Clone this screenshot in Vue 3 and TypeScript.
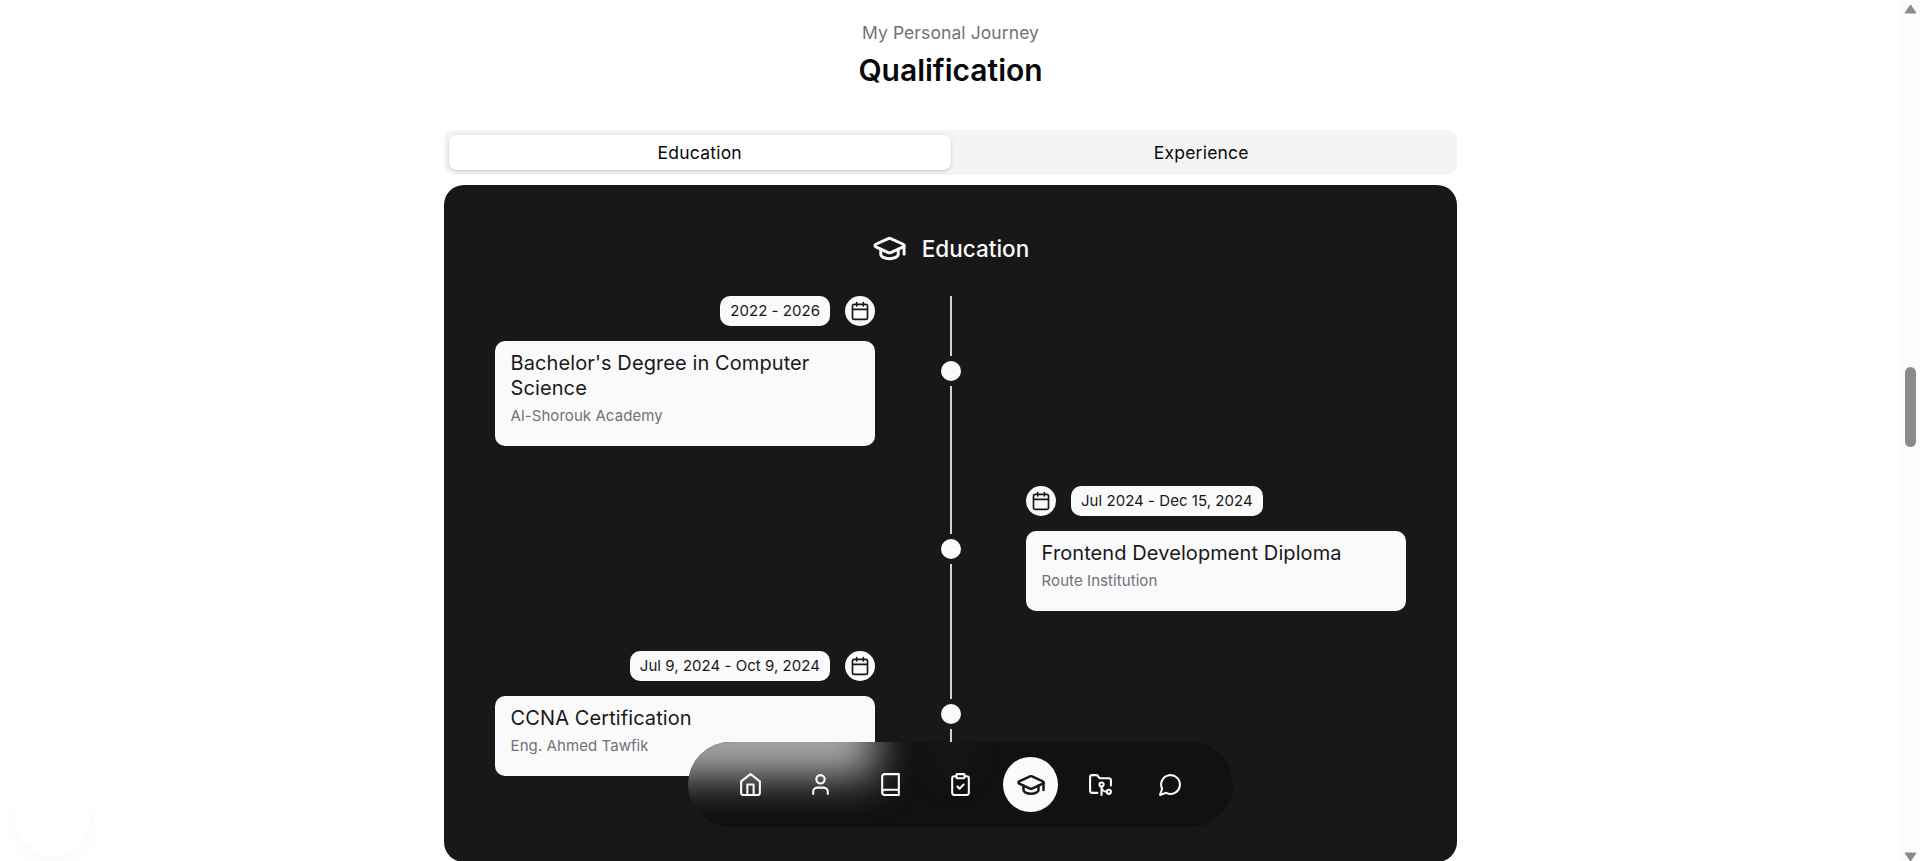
<template>
  <div class="page">
    <main class="content">
      <section class="qualification">
        <p class="section-subtitle">My Personal Journey</p>
        <h2 class="section-title">Qualification</h2>

        <div class="tabs">
          <button
            v-for="tab in tabs"
            :key="tab"
            class="tab"
            :class="{ selected: tab === activeTab }"
            @click="activeTab = tab"
          >
            {{ tab }}
          </button>
        </div>

        <div class="panel">
          <div class="panel-header">
            <svg class="icon header-icon" viewBox="0 0 24 24">
              <path v-for="d in icons.cap" :key="d" :d="d" />
            </svg>
            <h3>{{ activeTab }}</h3>
          </div>

          <!-- Timeline -->
          <div class="timeline">
            <div
              v-for="(item, index) in items"
              :key="item.title"
              class="row"
              :class="{ reverse: index % 2 === 1 }"
            >
              <div class="entry">
                <div class="date-row">
                  <span class="date">{{ item.date }}</span>
                  <span class="date-icon">
                    <svg class="icon calendar-icon" viewBox="0 0 24 24">
                      <path v-for="d in icons.calendar" :key="d" :d="d" />
                    </svg>
                  </span>
                </div>
                <div class="card">
                  <h4>{{ item.title }}</h4>
                  <p>{{ item.place }}</p>
                </div>
              </div>
              <div class="axis">
                <span class="line"></span>
                <span class="dot"></span>
                <span class="line"></span>
              </div>
              <div class="spacer"></div>
            </div>
          </div>
        </div>
      </section>
    </main>

    <!-- Scrollbar -->
    <div class="scrollbar">
      <svg class="arrow" viewBox="0 0 13 10"><path d="M6.5 1 L12 9 H1 Z" /></svg>
      <div class="thumb"></div>
      <svg class="arrow" viewBox="0 0 13 10"><path d="M6.5 9 L12 1 H1 Z" /></svg>
    </div>

    <div class="floating-circle"></div>

    <!-- Bottom navigation -->
    <nav class="navbar">
      <button
        v-for="link in links"
        :key="link"
        class="nav-item"
        :class="{ current: link === activeLink }"
        @click="activeLink = link"
      >
        <svg class="icon nav-icon" viewBox="0 0 24 24">
          <path v-for="d in icons[link]" :key="d" :d="d" />
        </svg>
      </button>
    </nav>
  </div>
</template>

<script setup lang="ts">
import { computed, ref } from 'vue'

interface TimelineItem {
  date: string
  title: string
  place: string
}

const tabs = ['Education', 'Experience']
const activeTab = ref('Education')

const links = ['home', 'user', 'book', 'clipboard', 'cap', 'folder', 'message']
const activeLink = ref('cap')

const timeline: Record<string, TimelineItem[]> = {
  Education: [
    { date: '2022 - 2026', title: "Bachelor's Degree in Computer Science", place: 'Al-Shorouk Academy' },
    { date: 'Jul 2024 - Dec 15, 2024', title: 'Frontend Development Diploma', place: 'Route Institution' },
    { date: 'Jul 9, 2024 - Oct 9, 2024', title: 'CCNA Certification', place: 'Eng. Ahmed Tawfik' }
  ],
  Experience: []
}

const items = computed(() => timeline[activeTab.value])

const icons: Record<string, string[]> = {
  home: [
    'm3 9 9-7 9 7v11a2 2 0 0 1-2 2H5a2 2 0 0 1-2-2z',
    'M9 22V12h6v10'
  ],
  user: [
    'M19 21v-2a4 4 0 0 0-4-4H9a4 4 0 0 0-4 4v2',
    'M8 7a4 4 0 1 0 8 0a4 4 0 1 0-8 0'
  ],
  book: ['M4 19.5v-15A2.5 2.5 0 0 1 6.5 2H20v20H6.5a2.5 2.5 0 0 1 0-5H20'],
  clipboard: [
    'M9 2h6a1 1 0 0 1 1 1v2a1 1 0 0 1-1 1H9a1 1 0 0 1-1-1V3a1 1 0 0 1 1-1z',
    'M16 4h2a2 2 0 0 1 2 2v14a2 2 0 0 1-2 2H6a2 2 0 0 1-2-2V6a2 2 0 0 1 2-2h2',
    'm9 14 2 2 4-4'
  ],
  cap: [
    'M21.42 10.922a1 1 0 0 0-.019-1.838L12.83 5.18a2 2 0 0 0-1.66 0L2.6 9.08a1 1 0 0 0 0 1.832l8.57 3.908a2 2 0 0 0 1.66 0z',
    'M22 10v6',
    'M6 12.5V16a6 3 0 0 0 12 0v-3.5'
  ],
  folder: [
    'M9 20H4a2 2 0 0 1-2-2V5a2 2 0 0 1 2-2h3.9a2 2 0 0 1 1.69.9l.81 1.2a2 2 0 0 0 1.67.9H20a2 2 0 0 1 2 2v5',
    'M11 12a2 2 0 1 0 4 0a2 2 0 1 0-4 0',
    'M18 19c-2.8 0-5-2.2-5-5v8',
    'M18 19a2 2 0 1 0 4 0a2 2 0 1 0-4 0'
  ],
  message: ['M7.9 20A9 9 0 1 0 4 16.1L2 22Z'],
  calendar: [
    'M8 2v4',
    'M16 2v4',
    'M5 4h14a2 2 0 0 1 2 2v14a2 2 0 0 1-2 2H5a2 2 0 0 1-2-2V6a2 2 0 0 1 2-2z',
    'M3 10h18'
  ]
}
</script>

<style>
body {
  margin: 0;
  overflow: hidden;
}
</style>

<style scoped>
.page {
  display: flex;
  height: 100vh;
  overflow: hidden;
  background: #fff;
  color: #09090b;
  font-family: Inter, "Liberation Sans", sans-serif;
}

h2,
h3,
h4,
p {
  margin: 0;
}

button {
  padding: 0;
  border: none;
  background: none;
  color: inherit;
  font-family: inherit;
  cursor: pointer;
}

.icon {
  display: block;
  flex: none;
  fill: none;
  stroke: currentColor;
  stroke-width: 2;
  stroke-linecap: round;
  stroke-linejoin: round;
}

.content {
  flex: 1;
  display: flex;
  justify-content: center;
}

.qualification {
  width: 1013px;
  padding-top: 20px;
}

.section-subtitle {
  color: #71717a;
  font-size: 17.5px;
  line-height: 25px;
  letter-spacing: 0.09px;
  text-align: center;
}

.section-title {
  margin-top: 5px;
  font-size: 30px;
  font-weight: 600;
  line-height: 40px;
  text-align: center;
}

.tabs {
  display: grid;
  grid-template-columns: 1fr 1fr;
  box-sizing: border-box;
  height: 45px;
  margin-top: 40px;
  padding: 5px;
  border-radius: 10px;
  background: #f4f4f5;
}

.tab {
  border-radius: 7.5px;
  font-size: 17.5px;
  font-weight: 400;
  letter-spacing: 0.22px;
}

.tab.selected {
  background: #fff;
  box-shadow: 0 1px 4px rgba(0, 0, 0, 0.12), 0 1px 2px rgba(0, 0, 0, 0.08);
}

.panel {
  box-sizing: border-box;
  height: 677px;
  margin-top: 10px;
  padding: 45px 51px 0;
  border-radius: 20px;
  background: #18181b;
  color: #fafafa;
}

.panel-header {
  display: flex;
  align-items: center;
  justify-content: center;
  gap: 15px;
  height: 36px;
}

.header-icon {
  width: 35px;
  height: 35px;
}

.panel-header h3 {
  font-size: 22.5px;
  font-weight: 500;
  line-height: 35px;
}

.timeline {
  display: flex;
  flex-direction: column;
  gap: 40px;
  margin-top: 30px;
}

.row {
  display: grid;
  grid-template-columns: 380px 1fr 380px;
}

.entry {
  display: flex;
  flex-direction: column;
  gap: 15px;
}

.date-row {
  display: flex;
  align-items: center;
  justify-content: flex-end;
  gap: 15px;
}

.date {
  padding: 0 10px;
  border-radius: 10px;
  background: #fafafa;
  color: #18181b;
  font-size: 15px;
  line-height: 30px;
  letter-spacing: 0.04px;
}

.date-icon {
  display: flex;
  align-items: center;
  justify-content: center;
  width: 30px;
  height: 30px;
  border-radius: 50%;
  background: #fafafa;
  color: #18181b;
}

.calendar-icon {
  width: 20px;
  height: 20px;
}

.card {
  padding: 10px 15.6px 20px;
  border-radius: 10px;
  background: #fafafa;
  color: #18181b;
}

.card h4 {
  font-size: 20px;
  font-weight: 400;
  line-height: 25px;
  letter-spacing: 0.09px;
}

.card p {
  margin-top: 5px;
  color: #71717a;
  font-size: 15px;
  line-height: 20px;
  letter-spacing: 0.07px;
}

.axis {
  display: flex;
  flex-direction: column;
  align-items: center;
}

.line {
  position: relative;
  flex: 1;
  width: 2px;
  background: #d4d4d8;
}

/* runs through the gap into the next row */
.row:not(:last-child) .line:last-child::after {
  content: '';
  position: absolute;
  top: 100%;
  left: 0;
  width: 2px;
  height: 40px;
  background: #d4d4d8;
}

.dot {
  flex: none;
  width: 20px;
  height: 20px;
  margin: 5px 0;
  border-radius: 50%;
  background: #fafafa;
}

.row.reverse .entry {
  order: 3;
}

.row.reverse .axis {
  order: 2;
}

.row.reverse .date-row {
  flex-direction: row-reverse;
}

.scrollbar {
  display: flex;
  flex-direction: column;
  align-items: center;
  box-sizing: border-box;
  width: 19px;
  padding-top: 4px;
  background: #fcfcfc;
}

.arrow {
  width: 13px;
  height: 10px;
  flex: none;
  fill: #8b8b8b;
  stroke: #8b8b8b;
  stroke-linejoin: round;
}

.thumb {
  width: 11px;
  height: 80px;
  margin: 353px 0 405px;
  flex: none;
  border-radius: 6px;
  background: #8b8b8b;
}

.floating-circle {
  position: fixed;
  bottom: 5px;
  left: 15px;
  width: 75px;
  height: 75px;
  border-radius: 50%;
  background: #fff;
  box-shadow: 0 6px 16px rgba(0, 0, 0, 0.03);
}

.navbar {
  position: fixed;
  z-index: 1;
  bottom: 34px;
  left: 688px;
  display: flex;
  gap: 15px;
  padding: 15px 35px;
  border-radius: 43px;
  background: #111113;
  color: #fafafa;
  overflow: hidden;
}

.navbar::before,
.navbar::after {
  content: '';
  position: absolute;
  z-index: -1;
  top: -34px;
  height: 68px;
  filter: blur(20px);
}

.navbar::before {
  left: -187px;
  width: 374px;
  background: #aaa;
}

.navbar::after {
  left: 262px;
  width: 2px;
  background: #909092;
}

.nav-item {
  display: flex;
  align-items: center;
  justify-content: center;
  width: 55px;
  height: 55px;
  border-radius: 50%;
}

.nav-icon {
  width: 25px;
  height: 25px;
}

.nav-item.current {
  background: #fafafa;
  color: #18181b;
}

.nav-item.current .nav-icon {
  width: 30px;
  height: 30px;
}
</style>
